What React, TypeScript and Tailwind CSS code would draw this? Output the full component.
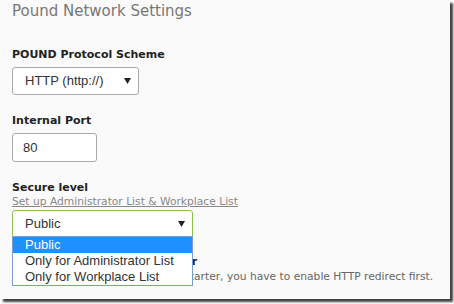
const Caret = () => (
  <svg width="7" height="6" viewBox="0 0 7 6" className="shrink-0">
    <path d="M0 0 L7 0 L3.5 6 Z" fill="#222" />
  </svg>
);

export default function App() {
  return (
    <div className="w-[454px] h-[304px] bg-white overflow-hidden">
      <div className="w-[450px] h-[299px] bg-[#fafafa] shadow-[3px_3px_2px_rgba(0,0,0,0.75)] px-3 font-['DejaVu_Sans',Verdana,sans-serif]">
        <h2 className="text-[15px] leading-[20px] text-[#777] pt-px">Pound Network Settings</h2>

        {/* Protocol */}
        <div className="mt-[27px]">
          <div className="text-[11px] font-bold leading-[14px] text-[#222]">POUND Protocol Scheme</div>
          <div className="mt-[5px] w-[127px] h-[28px] border border-[#aaa] rounded-[3px] bg-white flex items-center justify-between pl-3 pr-[7px] text-[13px] text-[#333] font-['Liberation_Sans',Arial,sans-serif]">
            <span>HTTP (http://)</span>
            <Caret />
          </div>
        </div>

        {/* Port */}
        <div className="mt-[19px]">
          <div className="text-[11px] font-bold leading-[14px] text-[#222]">Internal Port</div>
          <div className="mt-[5px] w-[85px] h-[29px] border border-[#aaa] rounded-[3px] bg-white flex items-center pl-[10px] text-[13px] text-[#333] font-['Liberation_Sans',Arial,sans-serif]">
            80
          </div>
        </div>

        {/* Secure level */}
        <div className="mt-[19px] relative">
          <div className="text-[11px] font-bold leading-[14px] text-[#222]">Secure level</div>
          <div className="text-[10.7px] leading-[13px] text-[#888] underline">
            Set up Administrator List &amp; Workplace List
          </div>
          <div className="mt-[2px] w-[181px] h-[28px] border border-[#8cc152] rounded-[3px] bg-white flex items-center justify-between pl-3 pr-[7px] text-[13px] text-[#333] font-['Liberation_Sans',Arial,sans-serif]">
            <span>Public</span>
            <Caret />
          </div>

          <div className="mt-[17px]">
            <div className="text-[11px] font-bold leading-[14px] text-[#222] whitespace-nowrap">HTTPS Redirection for Starter</div>
            <div className="text-[10.7px] leading-[14px] text-[#666] mt-px whitespace-nowrap">
              If you want to use HTTPS in the Starter, you have to enable HTTP redirect first.
            </div>
          </div>

          {/* open dropdown list */}
          <ul className="absolute left-0 top-[55px] w-[181px] bg-white border border-[#7a9cd3] text-[13px] leading-[16px] text-[#333] font-['Liberation_Sans',Arial,sans-serif]">
            <li className="bg-[#1e90ff] text-white pl-3">Public</li>
            <li className="pl-3">Only for Administrator List</li>
            <li className="pl-3">Only for Workplace List</li>
          </ul>
        </div>
      </div>
    </div>
  );
}
